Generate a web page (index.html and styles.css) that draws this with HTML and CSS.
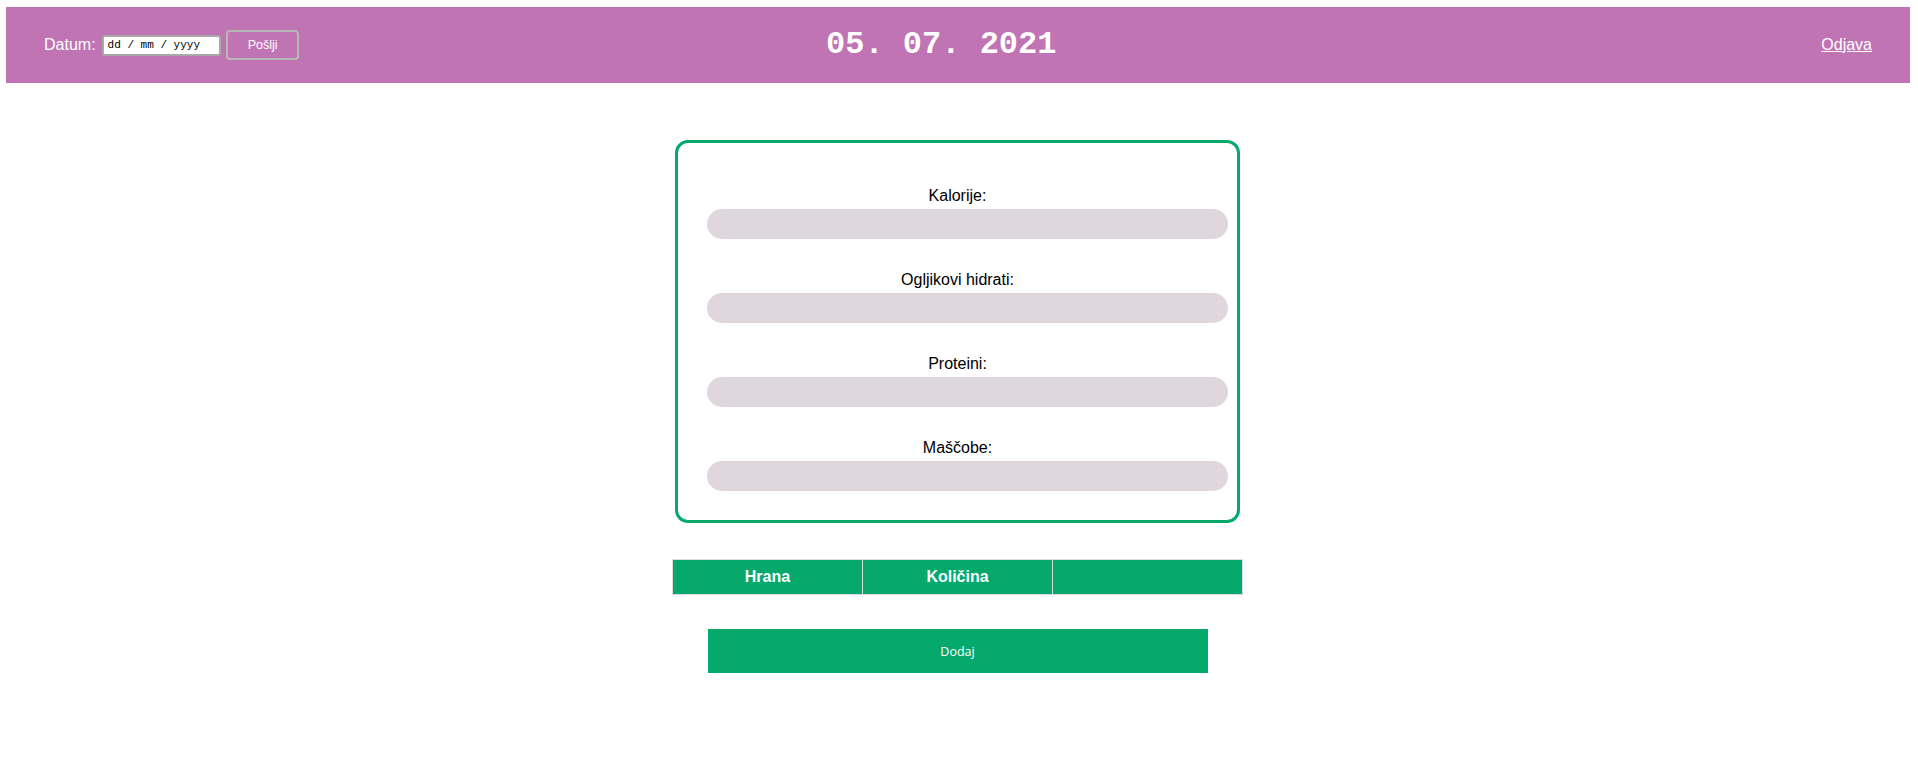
FILE: index.html
```html
<!DOCTYPE html>
<html lang="sl">
<head>
<meta charset="utf-8">
<title>Dnevnik</title>
<link rel="stylesheet" href="styles.css">
</head>
<body>
<header class="topbar">
  <form class="date-form">
    <label class="date-label">Datum:</label>
    <span class="date-input">dd / mm / yyyy</span>
    <button type="button" class="send-btn">Pošlji</button>
  </form>
  <h1 class="today">05. 07. 2021</h1>
  <a href="#" class="logout">Odjava</a>
</header>
<main class="content">
  <section class="card">
    <div class="stat">
      <div class="stat-label">Kalorije:</div>
      <div class="stat-bar"></div>
    </div>
    <div class="stat">
      <div class="stat-label">Ogljikovi hidrati:</div>
      <div class="stat-bar"></div>
    </div>
    <div class="stat">
      <div class="stat-label">Proteini:</div>
      <div class="stat-bar"></div>
    </div>
    <div class="stat">
      <div class="stat-label">Maščobe:</div>
      <div class="stat-bar"></div>
    </div>
  </section>
  <table class="food-table">
    <thead>
      <tr><th>Hrana</th><th>Količina</th><th></th></tr>
    </thead>
  </table>
  <button type="button" class="add-btn">Dodaj</button>
</main>
</body>
</html>
```

FILE: styles.css
```css
html, body {
  margin: 0;
  padding: 0;
  background: #ffffff;
  font-family: "Liberation Sans", Arial, sans-serif;
}

.topbar {
  margin: 7px 8px 0 6px;
  height: 76px;
  background: #c074b4;
  display: flex;
  align-items: center;
  padding: 0 38px 0 38px;
  color: #ffffff;
}

.date-form {
  display: flex;
  align-items: center;
  width: 255px;
}

.date-label {
  font-size: 16px;
  line-height: 18px;
  margin-right: 6px;
}

.date-input {
  box-sizing: border-box;
  width: 120px;
  height: 21px;
  background: #ffffff;
  border: 2px solid #a8a8a8;
  border-radius: 3px;
  color: #000000;
  font-family: "Liberation Mono", "Courier New", monospace;
  font-size: 11px;
  line-height: 17px;
  padding-left: 4px;
  white-space: pre;
}

.send-btn {
  box-sizing: border-box;
  width: 73px;
  height: 30px;
  margin-left: 5px;
  background: transparent;
  border: 2px solid #b8b8b8;
  border-radius: 4px;
  color: #ffffff;
  font-family: "Liberation Sans", Arial, sans-serif;
  font-size: 12.5px;
  padding: 0;
}

.today {
  margin: 0 0 0 527px;
  font-family: "Liberation Mono", "Courier New", monospace;
  font-weight: bold;
  font-size: 32px;
  line-height: 36px;
  color: #ffffff;
}

.logout {
  margin-left: auto;
  color: #ffffff;
  font-size: 16px;
  line-height: 18px;
  text-decoration: underline;
}

.content {
  display: flex;
  flex-direction: column;
  align-items: center;
  padding: 57px 3px 0 0;
}

.card {
  box-sizing: border-box;
  width: 565px;
  border: 3px solid #05a96c;
  border-radius: 13px;
  padding: 44px 0 29px;
  display: flex;
  flex-direction: column;
  gap: 32px;
}

.stat-label {
  text-align: center;
  font-size: 16px;
  line-height: 18px;
  color: #000000;
}

.stat-bar {
  height: 30px;
  margin: 4px 9px 0 29px;
  background: #e0d6de;
  border-radius: 15px;
}

.food-table {
  margin-top: 36px;
  width: 571px;
  border-collapse: collapse;
  table-layout: fixed;
}

.food-table th {
  background: #05a96c;
  color: #ffffff;
  border: 1px solid #dcdcdc;
  padding: 8px 0;
  font-size: 16px;
  line-height: 18px;
  font-weight: bold;
  text-align: center;
}

.add-btn {
  margin-top: 34px;
  width: 500px;
  height: 44px;
  border: none;
  background: #05a96c;
  color: #ffffff;
  font-family: "Open Sans", sans-serif;
  font-size: 12.5px;
  padding: 0;
}
```
